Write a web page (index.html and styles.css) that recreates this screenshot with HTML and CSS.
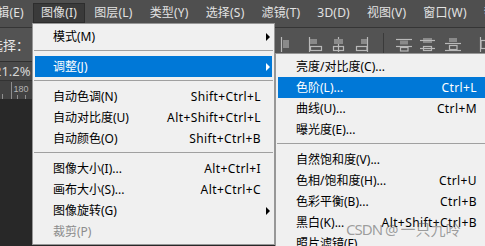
FILE: index.html
```html
<!DOCTYPE html>
<html lang="zh-CN">
<head>
    <meta charset="UTF-8">
    <title>图像 - 调整</title>
    <link rel="stylesheet" href="styles.css">
</head>
<body>
<div class="app">
    <div class="menubar">
        <span class="first">编辑(E)</span>
        <span class="active">图像(I)</span>
        <span>图层(L)</span>
        <span>类型(Y)</span>
        <span>选择(S)</span>
        <span>滤镜(T)</span>
        <span>3D(D)</span>
        <span>视图(V)</span>
        <span>窗口(W)</span>
        <span>帮助(H)</span>
    </div>
    <div class="options">
        <span class="opt-label">选择：</span>
        <svg class="align-icons" width="235" height="33" viewBox="0 0 235 33">
            <g stroke="#b9b9b9" stroke-width="1.2" fill="none">
                <!-- align left edges (cut) -->
                <line x1="31.5" y1="9" x2="31.5" y2="24"/>
                <rect x="33" y="12" width="6" height="8" fill="#8a8a8a" stroke="none"/>
                <!-- align left -->
                <line x1="59.5" y1="9" x2="59.5" y2="24"/>
                <rect x="60" y="11" width="7" height="5" fill="#8a8a8a" stroke="none"/>
                <rect x="60.5" y="18.5" width="11" height="4"/>
                <!-- align horizontal centers -->
                <line x1="88.5" y1="9" x2="88.5" y2="24"/>
                <rect x="84" y="11" width="9" height="5" fill="#8a8a8a" stroke="none"/>
                <rect x="83.5" y="18.5" width="10" height="4"/>
                <!-- align right -->
                <line x1="117.5" y1="9" x2="117.5" y2="24"/>
                <rect x="111" y="11" width="6" height="5" fill="#8a8a8a" stroke="none"/>
                <rect x="106.5" y="18.5" width="10.5" height="4"/>
                <!-- distribute top -->
                <line x1="146" y1="11.5" x2="162" y2="11.5"/>
                <rect x="150" y="12.5" width="8" height="4" fill="#8a8a8a" stroke="none"/>
                <line x1="146" y1="18.5" x2="162" y2="18.5"/>
                <rect x="150.5" y="19.5" width="7.5" height="3.5"/>
                <!-- distribute vertical centers -->
                <rect x="173" y="10" width="9" height="5" fill="#8a8a8a" stroke="none"/>
                <line x1="170" y1="12.5" x2="185" y2="12.5"/>
                <rect x="173.5" y="18.5" width="8" height="4"/>
                <line x1="170" y1="20.5" x2="185" y2="20.5"/>
                <!-- distribute bottom -->
                <rect x="199" y="10" width="8" height="4" fill="#8a8a8a" stroke="none"/>
                <line x1="195" y1="15.5" x2="211" y2="15.5"/>
                <rect x="199.5" y="17.5" width="7.5" height="4"/>
                <line x1="195" y1="22.5" x2="211" y2="22.5"/>
                <!-- distribute left (cut) -->
                <line x1="230.5" y1="9" x2="230.5" y2="24"/>
                <rect x="231" y="12.5" width="6" height="8"/>
            </g>
            <line x1="133.5" y1="5" x2="133.5" y2="26" stroke="#3a3a3a" stroke-width="1"/>
        </svg>
    </div>
    <div class="tabs"><span class="zoom">21.2%</span></div>
    <div class="ruler">
        <svg width="40" height="18" viewBox="0 0 40 18">
            <g stroke="#8e8e8e" stroke-width="1">
                <line x1="2.5" y1="13" x2="2.5" y2="18"/>
                <line x1="11.5" y1="1" x2="11.5" y2="18"/>
                <line x1="17.5" y1="14" x2="17.5" y2="18"/>
                <line x1="25.5" y1="14" x2="25.5" y2="18"/>
            </g>
            <text x="13.5" y="11" class="ruler-num">180</text>
        </svg>
    </div>
    <div class="canvas"></div>
</div>

<div class="menu menu-image">
    <div class="item"><span>模式(M)</span><i class="arrow"></i></div>
    <div class="sep"></div>
    <div class="item hl"><span>调整(J)</span><i class="arrow"></i></div>
    <div class="sep"></div>
    <div class="item"><span>自动色调(N)</span><span class="key">Shift+Ctrl+L</span></div>
    <div class="item"><span>自动对比度(U)</span><span class="key">Alt+Shift+Ctrl+L</span></div>
    <div class="item"><span>自动颜色(O)</span><span class="key">Shift+Ctrl+B</span></div>
    <div class="sep"></div>
    <div class="item"><span>图像大小(I)...</span><span class="key">Alt+Ctrl+I</span></div>
    <div class="item"><span>画布大小(S)...</span><span class="key">Alt+Ctrl+C</span></div>
    <div class="item"><span>图像旋转(G)</span><i class="arrow"></i></div>
    <div class="item off"><span>裁剪(P)</span></div>
</div>

<div class="menu menu-adjust">
    <div class="item"><span>亮度/对比度(C)...</span></div>
    <div class="item hl"><span>色阶(L)...</span><span class="key">Ctrl+L</span></div>
    <div class="item"><span>曲线(U)...</span><span class="key">Ctrl+M</span></div>
    <div class="item"><span>曝光度(E)...</span></div>
    <div class="sep"></div>
    <div class="item"><span>自然饱和度(V)...</span></div>
    <div class="item"><span>色相/饱和度(H)...</span><span class="key">Ctrl+U</span></div>
    <div class="item"><span>色彩平衡(B)...</span><span class="key">Ctrl+B</span></div>
    <div class="item"><span>黑白(K)...</span><span class="key">Alt+Shift+Ctrl+B</span></div>
    <div class="item"><span>照片滤镜(F)...</span></div>
</div>

<div class="watermark"><span class="wm-latin">CSDN @</span><span class="wm-cjk">一只九呤</span></div>
</body>
</html>
```

FILE: styles.css
```css
body{
    margin: 0;
    width: 485px;
    height: 246px;
    overflow: hidden;
    position: relative;
    background: #282828;
    font-family: "Noto Sans", "Noto Sans CJK SC", sans-serif;
}
.app{
    display: flex;
    flex-direction: column;
    height: 246px;
}

/* top menu bar */
.menubar{
    height: 27px;
    box-sizing: border-box;
    padding-top: 3px;
    display: flex;
    align-items: flex-start;
    gap: 1px;
    background: #4f4f4f;
    color: #e2e2e2;
    font-size: 12px;
    white-space: nowrap;
    overflow: hidden;
}
.menubar span{
    flex: none;
    height: 20px;
    line-height: 20px;
    padding: 0 8px;
    box-sizing: border-box;
    letter-spacing: 0.2px;
}
.menubar .first{
    margin-left: -23px;
}
.menubar .active{
    background: #3a3a3a;
    border: 1px solid #2d2d2d;
    line-height: 18px;
    padding: 0 7px;
}

/* options bar */
.options{
    height: 33px;
    border-top: 1px solid #353535;
    border-bottom: 1px solid #303030;
    background: #535353;
    display: flex;
    align-items: center;
    overflow: hidden;
}
.opt-label{
    margin-left: -10px;
    color: #e6e6e6;
    font-size: 13px;
}
.align-icons{
    display: block;
    margin-left: auto;
}

.tabs{
    height: 18px;
    background: #4a4a4a;
    border-bottom: 1px solid #333;
    display: flex;
    align-items: center;
    overflow: hidden;
}
.zoom{
    margin-left: -6px;
    color: #d6d6d6;
    font-size: 13px;
}
.ruler{
    height: 18px;
    background: #424242;
}
.ruler svg{
    display: block;
}
.ruler-num{
    font-family: "Liberation Sans", sans-serif;
    font-size: 9px;
    fill: #b4b4b4;
}
.canvas{
    flex: 1;
    background: #282828;
}

/* drop-down menus */
.menu{
    position: absolute;
    box-sizing: border-box;
    background: #f0f0f0;
    border: 1px solid #979797;
    padding: 2px 0;
    font-size: 12px;
    color: #000;
    white-space: nowrap;
}
.menu-image{
    left: 32px;
    top: 23px;
    width: 243px;
}
.menu-adjust{
    left: 275px;
    top: 53px;
    width: 216px;
}
.item{
    display: grid;
    grid-template-columns: 1fr auto 11px;
    height: 21px;
    line-height: 21px;
    margin: 0 2px;
    padding-left: 18px;
}
.item > span:first-child{
    grid-column: 1;
}
.item .key{
    grid-column: 2;
    letter-spacing: 0.4px;
}
.item .arrow{
    grid-column: 3;
    align-self: center;
    justify-self: start;
    margin-left: 5px;
    width: 0;
    height: 0;
    border-left: 4px solid #000;
    border-top: 4px solid transparent;
    border-bottom: 4px solid transparent;
}
.item.hl{
    background: #0078d7;
    color: #fff;
}
.item.hl .arrow{
    border-left-color: #fff;
}
.item.off{
    color: #8c8c8c;
}
.sep{
    height: 1px;
    margin: 3px 1px 5px;
    background: #a0a0a0;
}

.watermark{
    position: absolute;
    left: 346px;
    top: 218px;
    color: rgba(85, 85, 85, 0.55);
    white-space: nowrap;
    line-height: 22px;
}
.wm-latin{
    font-size: 15px;
    letter-spacing: -1px;
    margin-right: 3px;
}
.wm-cjk{
    font-size: 15px;
}
```
